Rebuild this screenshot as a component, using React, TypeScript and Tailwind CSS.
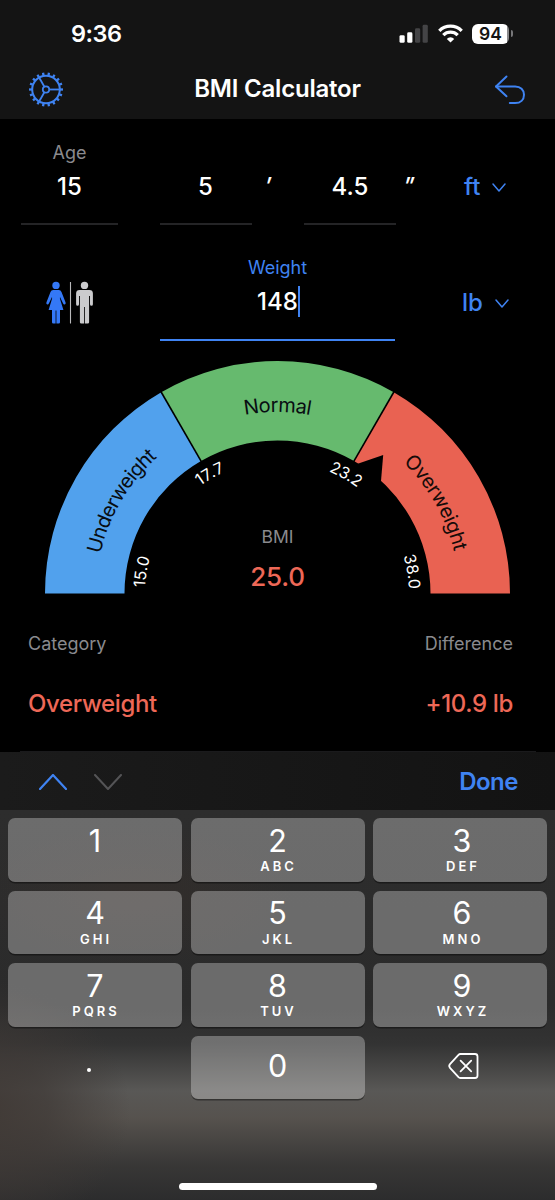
import type { ReactNode } from "react";

const GAUGE = { cx: 277.5, cy: 593.5, outer: 232.5, inner: 153 };

// Angle in degrees, counter-clockwise, 0 = right end of the gauge
function point(r: number, deg: number) {
  const a = (deg * Math.PI) / 180;
  return `${(GAUGE.cx + r * Math.cos(a)).toFixed(2)} ${(GAUGE.cy - r * Math.sin(a)).toFixed(2)}`;
}

function arc(r: number, from: number, to: number) {
  return `M${point(r, from)}A${r} ${r} 0 0 1 ${point(r, to)}`;
}

function band(from: number, to: number) {
  const { outer, inner } = GAUGE;
  return `${arc(outer, from, to)}L${point(inner, to)}A${inner} ${inner} 0 0 0 ${point(inner, from)}Z`;
}

const bands = [
  { from: 180, to: 120, fill: "#51a1ed" },
  { from: 120, to: 60, fill: "#66ba6e" },
  { from: 60, to: 0, fill: "#e96252" },
];

const arcLabels = [
  { id: "under", text: "Underweight", r: 181.5, from: 167.4, length: 114, size: 20, fill: "#080d12" },
  { id: "normal", text: "Normal", r: 181.5, from: 100.4, length: 66, size: 20, fill: "#080d12" },
  { id: "over", text: "Overweight", r: 181.5, from: 46.2, length: 104, size: 20, fill: "#160b09" },
  { id: "t15", text: "15.0", r: 132.5, from: 177.4, length: 30.5, size: 16, fill: "#fff" },
  { id: "t17", text: "17.7", r: 132.5, from: 125.8, length: 29, size: 16, fill: "#fff" },
  { id: "t23", text: "23.2", r: 132.5, from: 67.2, length: 33, size: 16, fill: "#fff" },
  { id: "t38", text: "38.0", r: 131.5, from: 16.6, length: 34, size: 16, fill: "#fff" },
];

const keys = [
  { digit: "1", letters: "" },
  { digit: "2", letters: "ABC" },
  { digit: "3", letters: "DEF" },
  { digit: "4", letters: "GHI" },
  { digit: "5", letters: "JKL" },
  { digit: "6", letters: "MNO" },
  { digit: "7", letters: "PQRS" },
  { digit: "8", letters: "TUV" },
  { digit: "9", letters: "WXYZ" },
];

function Chevron({ className, up = false, width = 14, height = 9, stroke = 1.5 }: {
  className?: string;
  up?: boolean;
  width?: number;
  height?: number;
  stroke?: number;
}) {
  const d = up
    ? `M1 ${height - 1}L${width / 2} 1L${width - 1} ${height - 1}`
    : `M1 1L${width / 2} ${height - 1}L${width - 1} 1`;
  return (
    <svg className={className} width={width} height={height} fill="none" stroke="currentColor" strokeWidth={stroke} strokeLinecap="round" strokeLinejoin="round">
      <path d={d} />
    </svg>
  );
}

function StatusBar() {
  return (
    <div className="flex h-[67px] items-center pl-[71px] pr-[42px] text-white">
      <span className="text-[23.5px] font-semibold leading-none tracking-[-0.5px]">9:36</span>
      <div className="ml-auto flex items-center">
        <svg width="30" height="20" viewBox="0 0 30 20" fill="#fff">
          <rect x="0.5" y="11.2" width="5.2" height="7.6" rx="1.4" />
          <rect x="8.2" y="8.3" width="5.2" height="10.5" rx="1.4" />
          <rect x="16" y="4.3" width="5.2" height="14.5" rx="1.4" fill="#444446" />
          <rect x="23.6" y="0.8" width="5.2" height="18" rx="1.4" fill="#444446" />
        </svg>
        <svg className="ml-[8.5px]" width="25" height="20" viewBox="0 0 25 20" fill="none" stroke="#fff" strokeWidth="3.3">
          <path d="M1.3 6.8A15.9 15.9 0 0 1 23.7 6.8" />
          <path d="M5.3 11.1A10.2 10.2 0 0 1 19.7 11.1" />
          <path d="M12.5 18.6L8.8 14.9A5.2 5.2 0 0 1 16.2 14.9Z" fill="#fff" stroke="none" />
        </svg>
        <div className="ml-[9.5px] flex h-5 w-[37px] items-center justify-center rounded-[6px] bg-gradient-to-r from-white from-[94%] to-[#8a8a8c] to-[94%] text-[17.5px] font-semibold leading-none text-[#141414]">
          94
        </div>
        <div className="ml-[1.5px] h-[7px] w-[2.5px] rounded-r-full bg-[#777779]" />
      </div>
    </div>
  );
}

function GearIcon() {
  const teeth = Array.from({ length: 18 }, (_, i) => i * 20);
  return (
    <svg width="36" height="36" viewBox="-18 -18.5 36 36" fill="none" stroke="#3f83f2" strokeWidth="1.8">
      <circle r="13.8" strokeWidth="2" />
      <circle r="3.2" />
      {teeth.map((deg) => (
        <path key={deg} d="M14 0H17" strokeWidth="2.3" transform={`rotate(${deg})`} />
      ))}
      {[0, 120, 240].map((deg) => (
        <path key={deg} d="M3.2 0H13.5" transform={`rotate(${deg})`} />
      ))}
    </svg>
  );
}

function NavBar() {
  return (
    <div className="grid h-[44px] grid-cols-[1fr_auto_1fr] items-center px-7">
      <GearIcon />
      <h1 className="text-[24px] font-semibold leading-none tracking-[-0.2px] text-white">BMI Calculator</h1>
      <svg className="mr-[1.5px] justify-self-end" width="32" height="32" viewBox="494 73 32 32" fill="none" stroke="#3f83f2" strokeWidth="2" strokeLinecap="round" strokeLinejoin="round">
        <path d="M506.5 76.5L496 86.4L506.5 96.2" />
        <path d="M496 86.4H515.2C520.5 86.4 524 89.8 524 94.7C524 99.8 520.5 103.1 515.2 103.1H509.8" />
      </svg>
    </div>
  );
}

function Field({ label, className, children, active = false }: {
  label?: string;
  className: string;
  children: ReactNode;
  active?: boolean;
}) {
  return (
    <div className={`flex flex-col items-center ${className}`}>
      <div className={`h-[22px] text-[18px] leading-[22px] ${active ? "text-[#3f83f2]" : "text-[#8a8a8e]"}`}>{label}</div>
      <div className="mt-[6px] h-[34px] text-[24px] leading-[34px] font-[450] text-white">{children}</div>
      <div className={active ? "mt-[19.5px] h-[2.5px] w-full bg-[#3f83f2]" : "mt-[19px] h-[1.5px] w-full bg-[#242426]"} />
    </div>
  );
}

function Unit({ children }: { children: ReactNode }) {
  return (
    <div className="flex h-[34px] items-center gap-[12px] text-[24px] leading-[34px] font-[450] text-[#3f83f2]">
      {children}
      <Chevron />
    </div>
  );
}

function PeopleIcon() {
  return (
    <svg width="48" height="43" viewBox="46 281 48 43">
      <g fill="#3478f6">
        <circle cx="56" cy="285.4" r="3.7" />
        <path d="M53.2 290.1H58.8Q60.8 290.1 61.5 292L65.6 302.5Q66 304.2 64.8 304.4Q63.6 304.6 63 303.2L60 297L59.9 298.5L63.4 310H60V322.2Q60 323.4 58.7 323.4H56.4V310.5H55.6V323.4H53.3Q52 323.4 52 322.2V310H48.6L52.1 298.5L52 297L49 303.2Q48.4 304.6 47.2 304.4Q46 304.2 46.4 302.5L50.5 292Q51.2 290.1 53.2 290.1Z" />
      </g>
      <path d="M70.5 282V323.5" stroke="#b8b8ba" strokeWidth="1.1" />
      <g fill="#cbcbcd">
        <circle cx="84.5" cy="285.4" r="3.7" />
        <path d="M79.6 290.1H89.4Q92.9 290.1 92.9 293.5V304.2Q92.9 305.8 91.5 305.8Q90 305.8 90 304.2V296H89.1V322.2Q89.1 323.4 87.7 323.4H84.9V307H84.1V323.4H81.3Q79.9 323.4 79.9 322.2V296H79V304.2Q79 305.8 77.6 305.8Q76.1 305.8 76.1 304.2V293.5Q76.1 290.1 79.6 290.1Z" />
      </g>
    </svg>
  );
}

function MeasureForm() {
  return (
    <div className="h-[231px]">
      <div className="flex h-[116px] pt-[23px] pl-[21px]">
        <Field label="Age" className="w-[97px]">15</Field>
        <Field className="ml-[41.5px] w-[92px]">5</Field>
        <div className="mt-[28px] w-[52.5px] pr-[33px] text-right text-[24px] leading-[34px] font-medium italic text-white">′</div>
        <Field className="w-[92px]">4.5</Field>
        <div className="mt-[28px] w-[67px] pl-[8px] text-[24px] leading-[34px] font-medium tracking-[-1.4px] italic text-white">′′</div>
        <div className="mt-[28px] ml-[1px]">
          <Unit>ft</Unit>
        </div>
      </div>
      <div className="flex pt-[22px] pl-[46px]">
        <div className="mt-[24px]">
          <PeopleIcon />
        </div>
        <Field label="Weight" active className="ml-[66px] w-[235px]">
          <span className="relative">
            148
            <span className="absolute top-[-1px] right-[-2px] h-[31px] w-[2px] bg-[#3f83f2]" />
          </span>
        </Field>
        <div className="mt-[29px] ml-[67px]">
          <Unit>lb</Unit>
        </div>
      </div>
    </div>
  );
}

function Gauge() {
  return (
    <svg className="block" width="555" height="260" viewBox="0 350 555 260">
      {bands.map((b) => (
        <path key={b.from} d={band(b.from, b.to)} fill={b.fill} />
      ))}
      {[120, 60].map((deg) => (
        <path key={deg} d={`M${point(150, deg)}L${point(235, deg)}`} stroke="#000" strokeWidth="1.6" />
      ))}
      {/* needle cut into the inner edge */}
      <path d="M357 464L383.2 455L381 481L368 485Z" fill="#000" />
      {arcLabels.map((l) => (
        <g key={l.id}>
          <path id={l.id} d={arc(l.r, l.from, l.from - 80)} fill="none" />
          <text fontSize={l.size} fill={l.fill} textLength={l.length}>
            <textPath href={`#${l.id}`} textLength={l.length}>{l.text}</textPath>
          </text>
        </g>
      ))}
      <text x="277.5" y="543" textAnchor="middle" fontSize="17.5" fill="#8a8a8e">BMI</text>
      <text x="277.5" y="586" textAnchor="middle" fontSize="26" fontWeight="450" letterSpacing="-0.2" fill="#ee6857">25.0</text>
    </svg>
  );
}

function Result() {
  return (
    <div className="flex h-[142px] flex-col pt-[22.5px]">
      <div className="flex justify-between px-7 pr-[42px] text-[18px] leading-[22px] text-[#8a8a8e]">
        <span>Category</span>
        <span>Difference</span>
      </div>
      <div className="mt-[33.5px] flex justify-between px-7 pr-[42px] text-[24px] leading-[32px] font-[450] tracking-[-0.35px] text-[#ee6857]">
        <span>Overweight</span>
        <span>+10.9 lb</span>
      </div>
      <div className="mt-auto mr-[19px] ml-5 h-[1.5px] bg-[#1a1a1c]" />
    </div>
  );
}

function Key({ digit, letters }: { digit: string; letters: string }) {
  return (
    <button
      type="button"
      className="flex h-[63.5px] flex-col items-center rounded-[7px] bg-white/30 pt-[6.5px] text-white shadow-[0_1.5px_0_rgba(0,0,0,0.4)] nth-[3n]:pl-[4px]"
    >
      <span className="text-[30.5px] leading-[32px]">{digit}</span>
      <span className="mt-[1.5px] pl-[2px] text-[13px] leading-[16px] font-semibold tracking-[3px]">{letters}</span>
    </button>
  );
}

function Keyboard() {
  return (
    <div className="flex h-[448px] flex-col">
      <div className="flex h-[58px] items-center bg-gradient-to-r from-[#1b1b1b] via-[#171717] to-[#131313] pt-[2px] pr-[37px] pl-[39px]">
        <Chevron up width={28} height={16} stroke={2.2} className="text-[#3f83f2]" />
        <Chevron width={28} height={16} stroke={2} className="ml-[27px] text-[#545456]" />
        <span className="ml-auto text-[24px] font-semibold leading-none tracking-[-0.5px] text-[#3f83f2]">Done</span>
      </div>
      <div className="flex flex-1 flex-col bg-[radial-gradient(ellipse_150px_130px_at_-20px_77%,rgba(62,55,51,0.9),rgba(62,56,53,0.7)_45%,rgba(70,66,64,0)),radial-gradient(ellipse_160px_70px_at_24%_22%,rgba(64,48,40,0.3),rgba(64,48,40,0)),linear-gradient(to_bottom,#2d2d2d_0%,#2b2b2b_50%,#333333_60%,#595856_72%,#56524e_79%,#383736_91%,#2c2c2d_100%)]">
        <div className="grid grid-cols-3 gap-x-[8.5px] gap-y-[9px] px-2 pt-2">
          {keys.map((k) => (
            <Key key={k.digit} {...k} />
          ))}
          <div className="flex items-center justify-center pt-[6px] pr-[12px]">
            <span className="size-[4px] overflow-hidden rounded-full bg-white text-[4px] leading-[4px] text-white">.</span>
          </div>
          <button
            type="button"
            className="flex h-[63.5px] justify-center rounded-[7px] bg-white/30 pt-[14px] text-[30.5px] leading-[32px] text-white shadow-[0_1.5px_0_rgba(0,0,0,0.4)]"
          >
            0
          </button>
          <div className="flex items-center justify-center pb-[2px] pl-[6px]">
            <svg width="32" height="28" viewBox="447 1052 32 28" fill="none" stroke="#fff" strokeWidth="1.8" strokeLinecap="round" strokeLinejoin="round">
              <path d="M460.3 1054H475Q477.5 1054 477.5 1056.5V1075.5Q477.5 1078 475 1078H460.3Q459.3 1078 458.5 1077.2L450 1067.8Q448.4 1066 450 1064.2L458.5 1054.8Q459.3 1054 460.3 1054Z" />
              <path d="M460.6 1060.7L471.2 1071.3M471.2 1060.7L460.6 1071.3" />
            </svg>
          </div>
        </div>
        <div className="mx-auto mt-auto mb-[10px] h-[7px] w-[198px] rounded-full bg-white" />
      </div>
    </div>
  );
}

export default function App() {
  return (
    <main className="h-[1200px] w-[555px] overflow-hidden bg-black font-['Inter','Liberation_Sans',sans-serif]">
      <header className="h-[119px] bg-[#141414]">
        <StatusBar />
        <NavBar />
      </header>
      <MeasureForm />
      <Gauge />
      <Result />
      <Keyboard />
    </main>
  );
}
